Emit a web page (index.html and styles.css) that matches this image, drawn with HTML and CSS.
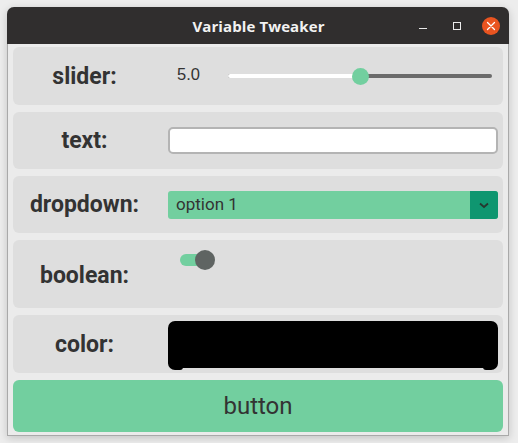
FILE: index.html
```html
<!DOCTYPE html>
<html>
<head>
<meta charset="utf-8">
<link rel="stylesheet" href="styles.css">
</head>
<body>
<div class="window">
  <div class="titlebar">
    <span class="title">Variable Tweaker</span>
    <div class="controls">
      <span class="ctl min"></span>
      <span class="ctl max"></span>
      <span class="ctl close">
        <svg width="18" height="18" viewBox="0 0 18 18"><path d="M5.5 5.5 L12.5 12.5 M12.5 5.5 L5.5 12.5" stroke="#fff" stroke-width="1.3" stroke-linecap="round"/></svg>
      </span>
    </div>
  </div>
  <div class="content">
    <div class="row r-slider">
      <div class="label">slider:</div>
      <div class="widget slider">
        <span class="value">5.0</span>
        <div class="track">
          <div class="fill" style="width:50%"></div>
          <div class="thumb" style="left:50%"></div>
        </div>
      </div>
    </div>
    <div class="row r-text">
      <div class="label">text:</div>
      <div class="widget"><div class="input"></div></div>
    </div>
    <div class="row r-drop">
      <div class="label">dropdown:</div>
      <div class="widget">
        <div class="dropdown">
          <span class="opt">option 1</span>
          <span class="arrow"><svg width="12" height="8" viewBox="0 0 12 8"><path d="M2 2.5 L6 6 L10 2.5" fill="none" stroke="#26372f" stroke-width="1.8"/></svg></span>
        </div>
      </div>
    </div>
    <div class="row r-bool">
      <div class="label">boolean:</div>
      <div class="widget top">
        <div class="toggle"><span class="knob"></span></div>
      </div>
    </div>
    <div class="row r-color">
      <div class="label">color:</div>
      <div class="widget"><div class="swatch"></div></div>
    </div>
    <div class="button">button</div>
  </div>
</div>
</body>
</html>
```
FILE: styles.css
```css
html, body {
  margin: 0;
  padding: 0;
}
body {
  width: 518px;
  height: 443px;
  background: #ededed;
  overflow: hidden;
}
.window {
  margin: 7px 0 0 7px;
  width: 500px;
  border: 1px solid #a9a9a9;
  border-top: none;
  border-radius: 7px 7px 0 0;
  background: #ebebeb;
  box-shadow: 0 2px 8px rgba(0,0,0,0.18);
}
.titlebar {
  height: 37px;
  margin: 0 -1px;
  background: #302e2e;
  border-radius: 7px 7px 0 0;
  display: flex;
  align-items: center;
  justify-content: center;
  position: relative;
}
.title {
  font-family: "Open Sans", "DejaVu Sans", sans-serif;
  font-weight: 700;
  font-size: 15px;
  color: #f2f2f2;
  letter-spacing: 0.1px;
  margin-left: 1px;
}
.controls {
  position: absolute;
  right: 9px;
  top: 0;
  height: 37px;
  display: flex;
  align-items: center;
}
.ctl {
  display: block;
  box-sizing: border-box;
}
.min {
  width: 8px;
  height: 1px;
  background: #e8e8e8;
  margin-top: 5px;
  margin-right: 26px;
}
.max {
  width: 8px;
  height: 8px;
  border: 1px solid #ececec;
  margin-right: 21px;
}
.close {
  width: 18px;
  height: 18px;
  border-radius: 50%;
  background: #e95420;
  margin-top: 1px;
}
.close svg { display: block; }
.content {
  padding: 3px 5px 3px 5px;
  display: flex;
  flex-direction: column;
  gap: 7px;
}
.row {
  background: #dedede;
  border-radius: 6px;
  display: grid;
  grid-template-columns: 143px 1fr;
  column-gap: 12px;
  padding-right: 5px;
  align-items: center;
}
.r-slider { height: 58px; }
.r-text { height: 57px; }
.r-drop { height: 57px; }
.r-bool { height: 68px; }
.r-color { height: 58px; }
.label {
  font-family: Roboto, "Liberation Sans", sans-serif;
  font-weight: 700;
  font-size: 23px;
  color: #333333;
  text-align: center;
}
.r-bool .label { padding-top: 2px; }
.widget {
  font-family: Roboto, "Liberation Sans", sans-serif;
  font-size: 17px;
  color: #333333;
}
.widget.top {
  align-self: start;
  padding-top: 14px;
}
.slider {
  display: flex;
  align-items: center;
  padding-left: 9px;
  padding-right: 6px;
}
.value {
  width: 51px;
  font-family: "Liberation Sans", Arial, sans-serif;
  font-size: 16.5px;
  margin-top: -3px;
}
.track {
  position: relative;
  flex: 1;
  height: 4px;
  border-radius: 2px;
  background: #6b6b6b;
}
.fill {
  height: 4px;
  border-radius: 2px;
  background: #ffffff;
}
.thumb {
  position: absolute;
  top: 50%;
  width: 17px;
  height: 17px;
  margin: -8.5px 0 0 -8.5px;
  border-radius: 50%;
  background: #72cf9f;
}
.input {
  height: 27px;
  box-sizing: border-box;
  border: 2px solid #b4b4b4;
  border-radius: 5px;
  background: #ffffff;
}
.dropdown {
  height: 28px;
  display: flex;
  align-items: stretch;
  background: #72cf9f;
  border-radius: 3px;
  overflow: hidden;
}
.opt {
  flex: 1;
  padding-left: 8px;
  line-height: 26px;
  font-size: 17px;
}
.arrow {
  width: 28px;
  background: #0f9670;
  display: flex;
  align-items: center;
  justify-content: center;
  padding-top: 1px;
}
.arrow svg { display: block; }
.toggle {
  position: relative;
  margin-left: 12px;
  width: 30px;
  height: 12px;
  border-radius: 6px;
  background: #72cf9f;
}
.knob {
  position: absolute;
  left: 15px;
  top: -4px;
  width: 20px;
  height: 20px;
  border-radius: 50%;
  background: #5f6462;
}
.swatch {
  position: relative;
  height: 47px;
  background: #000000;
  border-radius: 7px;
}
.swatch::before,
.swatch::after {
  content: "";
  position: absolute;
  bottom: -2px;
  width: 15px;
  height: 10px;
  background: #000000;
}
.swatch::before {
  left: 0;
  border-radius: 0 0 3px 7px;
}
.swatch::after {
  right: 0;
  border-radius: 0 0 7px 3px;
}
.button {
  height: 52px;
  background: #72cf9f;
  border-radius: 6px;
  display: flex;
  align-items: center;
  justify-content: center;
  font-family: Roboto, "Liberation Sans", sans-serif;
  font-size: 24px;
  color: #333333;
}
```
